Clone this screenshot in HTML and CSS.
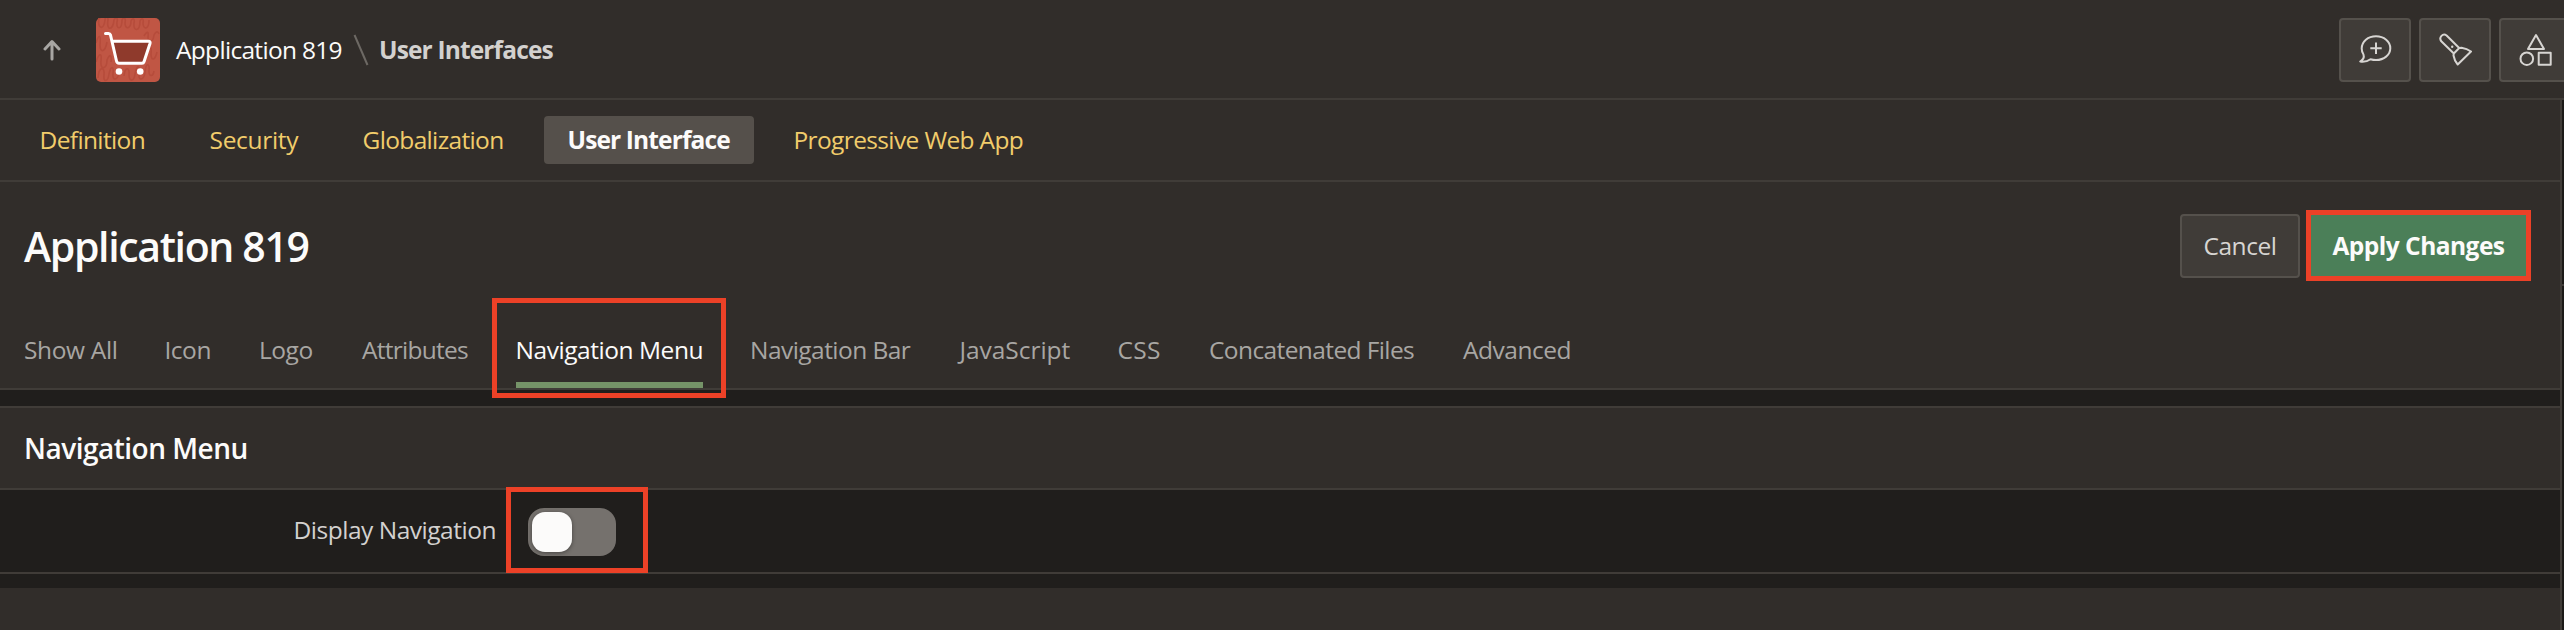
FILE: index.html
```html
<!DOCTYPE html>
<html lang="en">
<head>
<meta charset="utf-8">
<title>User Interfaces</title>
<link rel="stylesheet" href="styles.css">
</head>
<body>
<header class="topbar">
  <svg class="up" viewBox="0 0 18 22" width="18" height="22"><path d="M9 20V3M2 10l7-7.500L16 10"/></svg>
  <svg class="app-icon" viewBox="0 0 64 64" width="64" height="64">
    <rect width="64" height="64" rx="5" fill="#c05644"/>
    <g fill="none" stroke="#b64c3b" stroke-width="1.6">
      <path d="M3 0c-2 11 5 13 6 2 0-4 3-4 3 0-2 11 5 11 6 0 2-4 4-2 3 2-1 8 5 8 5-2 2-4 4-2 3 3 0 7 6 6 6-2 2-4 4-2 3 2-1 9 6 9 6-2 2-4 4-2 3 2 0 7 6 7 6-3"/>
      <path d="M0 25c3-9 5-9 4 2 0 8 5 8 7-3M0 44c3-9 6-10 5-1-1 10 6 8 6-1 3-7 5-5 4 2M50 36c3-10 6-10 5 0 0 7 4 7 6-2M48 18c3-5 5-5 4 1 0 6 5 6 6-2 2-4 4-4 5-1"/>
      <path d="M2 60c1-12 7-12 6-3-1 8 4 7 5-1 2-9 5-8 4 0-1 7 5 7 6-2M28 58c1-10 6-9 5-1 0 7 5 7 6-1 2-10 5-9 4 0-1 7 5 7 6-2 1-10 5-9 4-1 0 6 4 6 5 0"/>
    </g>
    <path d="M16.500 22H55l-7 23H22z" fill="#8f3a2c"/>
    <path d="M9.500 15.500H12.500q1.500 0 2 1.500l6 26q.5 2.200 2.500 2.200h23q1.500 0 2-1.500l6-18.200q.6-2.300-1.500-2.300H17" fill="none" stroke="#fff" stroke-width="3" stroke-linecap="round" stroke-linejoin="round"/>
    <circle cx="23" cy="53.500" r="3.300" fill="#fff"/><circle cx="44.200" cy="53.500" r="3.300" fill="#fff"/>
  </svg>
  <span class="crumb">Application 819</span>
  <svg class="slash" viewBox="0 0 16 32" width="16" height="32"><path d="M1.500 1l13 30"/></svg>
  <span class="crumb current">User Interfaces</span>
  <div class="tools">
    <span class="tool"><svg viewBox="0 0 34 34" width="34" height="34"><path d="M2.200 28.500C5.500 26.500 6.300 24 5.500 21.500 4 19.500 3.700 17.500 3.700 15.500 3.700 8.500 10 3.200 18 3.200s14.300 5.300 14.300 12S26 27 18 27c-2 0-3.500-.2-5.500-.8-3 2.200-6.500 2.800-10.300 2.300zM18 9.500v11.400M12.300 15.200h11.400"/></svg></span>
    <span class="tool"><svg viewBox="0 0 34 34" width="34" height="34"><path d="M2.300 8.300 14.800 20.500 20.200 15 7.600 2.500C3.900-.3-.6 4.300 2.300 8.300zM14.800 20.500l-.3 2q1 5.500 4.200 9L32 18.500q-4-2.800-9.500-3.700l-2.300.2"/><circle class="dot" cx="13.200" cy="13.700" r="1.200"/></svg></span>
    <span class="tool"><svg viewBox="0 0 34 34" width="34" height="34"><path d="M17 2 25 16H9zM19.700 19.700h12v12h-12z"/><circle cx="7.800" cy="25.700" r="6.300"/></svg></span>
  </div>
</header>
<div class="body">
<main class="page">
  <nav class="subnav">
    <a>Definition</a><a>Security</a><a>Globalization</a><a class="on">User Interface</a><a>Progressive Web App</a>
  </nav>
  <section class="title-bar">
    <h1>Application 819</h1>
    <div class="actions"><button class="cancel">Cancel</button><button class="apply">Apply Changes</button></div>
  </section>
  <nav class="tabs">
    <a>Show All</a><a>Icon</a><a>Logo</a><a>Attributes</a><a class="on">Navigation Menu</a><a>Navigation Bar</a><a>JavaScript</a><a>CSS</a><a>Concatenated Files</a><a>Advanced</a>
    <i class="callout tab-callout"></i>
  </nav>
  <section class="region">
    <h2>Navigation Menu</h2>
    <div class="field"><label>Display Navigation</label><span class="switch"><i class="knob"></i></span><i class="callout switch-callout"></i></div>
  </section>
  <div class="footer"></div>
</main>
<aside class="edge"></aside>
</div>
</body>
</html>
```
FILE: styles.css
```css
* { box-sizing: border-box; }
body {
  margin: 0; width: 2564px; height: 630px; overflow: hidden;
  background: #312d2a; color: #fcfbfa;
  font: 400 24.5px/34px "Open Sans", "Noto Sans", sans-serif;
  white-space: nowrap;
}
h1, h2 { margin: 0; }

/* Top bar */
.topbar { display: flex; align-items: center; height: 100px; border-bottom: 2px solid #403c38; padding: 2px 0 0 43px; overflow: hidden; }
.up { fill: none; stroke: #a8a6a3; stroke-width: 3; stroke-linecap: round; stroke-linejoin: round; flex: none; }
.app-icon { margin: 0 16px 0 35px; flex: none; }
.crumb { flex: none; width: 166px; letter-spacing: -.69px; }
.slash { margin: 0 10px 0 11px; fill: none; stroke: #6d6964; stroke-width: 2; flex: none; }
.crumb.current { width: auto; font-weight: 700; color: #d3d1cf; letter-spacing: -.85px; }
.tools { display: flex; gap: 8px; margin-left: auto; width: 225px; flex: none; }
.tool { flex: none; width: 72px; height: 64px; border: 2px solid #55514c; border-radius: 4px; background: #403c38; display: grid; place-items: center; }
.tool svg { fill: none; stroke: #d7d5d2; stroke-width: 2; stroke-linejoin: round; }
.tool:nth-child(n+2) svg { margin-left: 1px; }
.tool .dot { fill: #d7d5d2; stroke: none; }

.body { display: flex; height: 530px; }
.page { width: 2560px; display: flex; flex-direction: column; }

/* Application sections */
.subnav { height: 82px; border-bottom: 2px solid #403c38; display: flex; align-items: center; padding-left: 16px; gap: 16px; }
.subnav a { height: 48px; line-height: 48px; padding: 0 24px; border-radius: 4px; color: #f1cc6b; letter-spacing: -.63px; text-indent: -.5px; }
.subnav a:nth-child(1) { width: 153.5px; }
.subnav a:nth-child(2) { width: 137px; letter-spacing: -.3px; text-indent: 0; }
.subnav a:nth-child(3) { width: 189.5px; letter-spacing: -.65px; text-indent: 0; }
.subnav .on { width: 210px; background: #55504b; color: #fcfbfa; font-weight: 700; letter-spacing: -.87px; }

/* Page title and actions */
.title-bar { height: 128px; padding: 0 29px 0 24px; display: flex; justify-content: space-between; align-items: flex-start; }
h1 { font-size: 41px; line-height: 128px; font-weight: 600; letter-spacing: -1.35px; }
.actions { display: flex; align-items: flex-start; gap: 6px; margin-top: 28px; }
button { font: inherit; color: #d7d5d2; border: 2px solid #55514c; background: #403c38; padding: 0; }
.cancel { width: 120px; height: 64px; margin-top: 4px; border-radius: 4px; letter-spacing: -.45px; }
.apply { width: 225px; height: 71px; border: 5px solid #ec4127; background: #4b7f58; color: #fcfbfa; font-weight: 700; letter-spacing: -.52px; }

/* Tabs */
.tabs { position: relative; height: 80px; border-bottom: 2px solid #403c38; display: flex; gap: 48px; padding-left: 24px; color: #a8a6a3; }
.tabs a { height: 78px; line-height: 79px; letter-spacing: -.48px; text-indent: -1px; }
.tabs a:nth-child(1) { width: 93.5px; letter-spacing: -.36px; text-indent: 0; }
.tabs a:nth-child(2) { width: 46.5px; }
.tabs a:nth-child(3) { width: 54px; }
.tabs a:nth-child(4) { width: 106px; letter-spacing: -.74px; text-indent: 0; }
.tabs a:nth-child(6) { width: 160px; letter-spacing: -.54px; }
.tabs a:nth-child(7) { width: 111.5px; letter-spacing: -.05px; text-indent: .5px; }
.tabs a:nth-child(8) { width: 43.5px; letter-spacing: .3px; }
.tabs a:nth-child(9) { width: 205px; letter-spacing: -.6px; }
.tabs a:nth-child(10) { text-indent: 0; }
.tabs .on { width: 187px; color: #fcfbfa; border-bottom: 6px solid #759368; letter-spacing: -.45px; text-indent: -.5px; }

/* Highlight frames laid over the controls */
.callout { position: absolute; border: 5px solid #ec4127; }
.tab-callout { left: 492px; top: -12px; width: 234px; height: 100px; }
.switch-callout { left: 506px; top: -3px; width: 142px; height: 86px; }

/* Settings region */
.region { border-top: 16px solid #201e1c; border-bottom: 2px solid #403c38; background: #201e1c; height: 184px; }
h2 { height: 84px; background: #312d2a; border: solid #403c38; border-width: 2px 0; padding-left: 24px; font-size: 28px; line-height: 80px; font-weight: 600; letter-spacing: -.5px; }
.field { position: relative; display: flex; align-items: center; height: 82px; }
label { width: 496px; padding-bottom: 2px; text-align: right; color: #d3d1cf; letter-spacing: -.48px; }
.switch { width: 88px; height: 48px; margin: 2px 0 0 32px; padding: 4px; border-radius: 16px; background: #75716d; }
.knob { display: block; width: 40px; height: 40px; border-radius: 13px; background: #fcfbfa; box-shadow: 0 1px 4px #0006; }
.footer { height: 56px; border-top: 14px solid #201e1c; }

/* Neighbouring panel, mostly off screen */
.edge { width: 4px; border-left: 2px solid #403c38; background: linear-gradient(#1c1a18 184px, #403c38 184px 186px, #1c1a18 186px); }
```
